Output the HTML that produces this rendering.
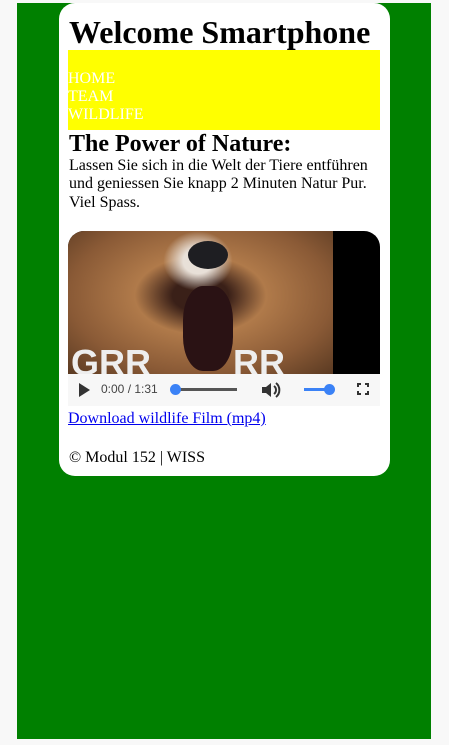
<!DOCTYPE html>
<html><head><style>
body{margin:0;background:#f8f8f8;width:449px;height:745px;overflow:hidden;font-family:"Liberation Serif",serif;}
.g{position:absolute;left:17px;top:3px;width:414px;height:736px;background:#008000;}
.c{position:absolute;left:59px;top:3px;width:331px;height:473px;background:#fff;border-radius:16px;}
.a{position:absolute;white-space:nowrap;color:#000;}
</style></head><body>
<div class="g"></div>
<div class="c"></div>
<div class="a" style="left:69px;top:14px;font-size:32px;font-weight:bold;line-height:37px">Welcome Smartphone</div>
<div class="a" style="left:68px;top:50px;width:312px;height:80px;background:#ff0"></div>
<div class="a" style="left:68px;top:70px;color:#fff;font-size:16px;line-height:18px">HOME<br>TEAM<br>WILDLIFE</div>
<div class="a" style="left:69px;top:131px;font-size:24px;font-weight:bold;line-height:27px">The Power of Nature:</div>
<div class="a" style="left:69px;top:157px;font-size:16px;line-height:18.3px">Lassen Sie sich in die Welt der Tiere entführen<br>und geniessen Sie knapp 2 Minuten Natur Pur.<br>Viel Spass.</div>
<div class="a" style="left:68px;top:231px;width:312px;height:175px;border-radius:16px 16px 0 0;overflow:hidden;background:#000">
 <div style="position:absolute;left:0;top:0;width:265px;height:143px;background:radial-gradient(ellipse at 50% 45%,#3a2018 0 15%,#b07a4a 35%,#8a5a36 70%,#5a3a22 100%)"></div>
 <div style="position:absolute;left:95px;top:0;width:70px;height:60px;background:radial-gradient(ellipse,#e8e0d8 0 30%,transparent 70%)"></div>
 <div style="position:absolute;left:120px;top:10px;width:40px;height:28px;background:#1e1e22;border-radius:50%"></div>
 <div style="position:absolute;left:115px;top:55px;width:50px;height:85px;background:#2a1214;border-radius:40%"></div>
 <div style="position:absolute;left:3px;top:111px;color:#eee;font:bold 36px 'Liberation Sans',sans-serif">GRR</div>
 <div style="position:absolute;left:165px;top:111px;color:#eee;font:bold 36px 'Liberation Sans',sans-serif">RR</div>
 <div style="position:absolute;left:0;top:143px;width:312px;height:32px;background:#f7f7f7"></div>
 <div style="position:absolute;left:11px;top:152px;width:0;height:0;border-left:11px solid #333;border-top:7px solid transparent;border-bottom:7px solid transparent"></div>
 <div style="position:absolute;left:33px;top:151px;font:12px 'Liberation Sans',sans-serif;color:#444">0:00 / 1:31</div>
 <div style="position:absolute;left:106px;top:157px;width:63px;height:3px;background:#555"></div>
 <div style="position:absolute;left:102px;top:153px;width:11px;height:11px;border-radius:50%;background:#3b82f6"></div>
 <svg style="position:absolute;left:193px;top:150px" width="20" height="18" viewBox="0 0 20 18"><path d="M1 6h4l5-4v14l-5-4H1z" fill="#333"/><path d="M13 5a5 5 0 0 1 0 8M15 2a9 9 0 0 1 0 14" stroke="#333" stroke-width="2" fill="none"/></svg>
 <div style="position:absolute;left:236px;top:157px;width:22px;height:3px;background:#3b82f6"></div>
 <div style="position:absolute;left:256px;top:153px;width:11px;height:11px;border-radius:50%;background:#3b82f6"></div>
 <div style="position:absolute;left:289px;top:152px;width:12px;height:12px;border:2px solid #333;box-sizing:border-box"></div>
 <div style="position:absolute;left:293px;top:152px;width:4px;height:12px;background:#f7f7f7"></div>
 <div style="position:absolute;left:289px;top:156px;width:12px;height:4px;background:#f7f7f7"></div>
</div>
<div class="a" style="left:68px;top:410px;font-size:16px;line-height:18px;color:#00e;text-decoration:underline">Download wildlife Film (mp4)</div>
<div class="a" style="left:69px;top:449px;font-size:16px;line-height:18px">© Modul 152 | WISS</div>
</body></html>
